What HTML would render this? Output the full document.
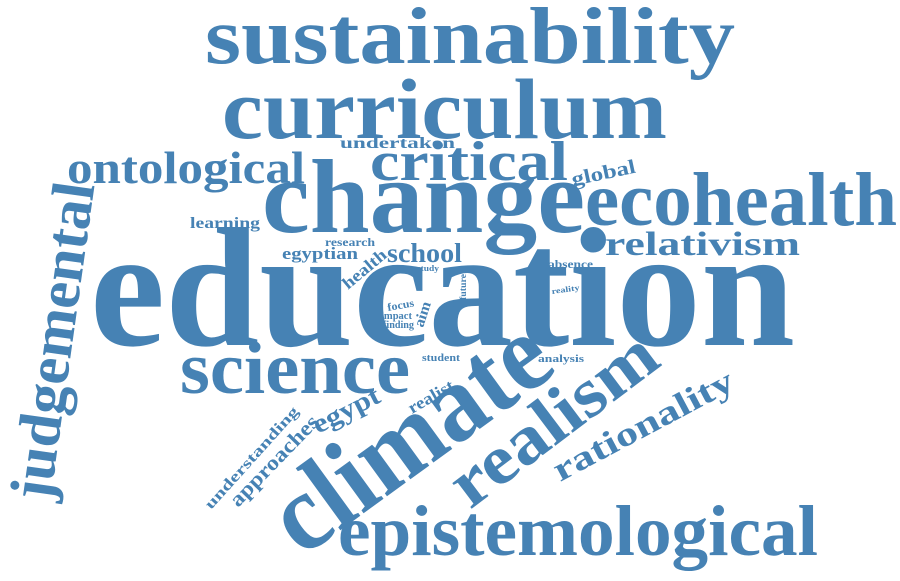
<!DOCTYPE html>
<html><head><meta charset="utf-8"><style>
html,body{margin:0;padding:0;background:#fff;}
svg{display:block}
text{font-family:"Liberation Serif",serif;font-weight:bold;fill:#4682b4;}
</style></head><body>
<svg width="900" height="581" viewBox="0 0 900 581" xmlns="http://www.w3.org/2000/svg">
<text x="205" y="63" font-size="80" textLength="530" lengthAdjust="spacingAndGlyphs">sustainability</text>
<text x="222" y="138" font-size="86" textLength="445" lengthAdjust="spacingAndGlyphs">curriculum</text>
<text x="67" y="183" font-size="46" textLength="238" lengthAdjust="spacingAndGlyphs">ontological</text>
<text x="370" y="180" font-size="56" textLength="198" lengthAdjust="spacingAndGlyphs">critical</text>
<text x="340" y="148" font-size="16" textLength="115" lengthAdjust="spacingAndGlyphs">undertaken</text>
<text x="0" y="0" font-size="20" textLength="65" lengthAdjust="spacingAndGlyphs" transform="translate(573,186) rotate(-12)">global</text>
<text x="262" y="232" font-size="105" textLength="323" lengthAdjust="spacingAndGlyphs">change</text>
<text x="585" y="225" font-size="76" textLength="312" lengthAdjust="spacingAndGlyphs">ecohealth</text>
<text x="190" y="228" font-size="16" textLength="70" lengthAdjust="spacingAndGlyphs">learning</text>
<text x="605" y="255" font-size="34" textLength="195" lengthAdjust="spacingAndGlyphs">relativism</text>
<text x="325" y="246" font-size="12" textLength="50" lengthAdjust="spacingAndGlyphs">research</text>
<text x="282" y="259" font-size="17" textLength="76" lengthAdjust="spacingAndGlyphs">egyptian</text>
<text x="387" y="262" font-size="27" textLength="75" lengthAdjust="spacingAndGlyphs">school</text>
<text x="0" y="0" font-size="17" textLength="52" lengthAdjust="spacingAndGlyphs" transform="translate(348,290) rotate(-40)">health</text>
<text x="548" y="268" font-size="12" textLength="45" lengthAdjust="spacingAndGlyphs">absence</text>
<text x="417" y="271" font-size="8" textLength="22" lengthAdjust="spacingAndGlyphs">study</text>
<text x="90" y="345" font-size="170" textLength="705" lengthAdjust="spacingAndGlyphs">education</text>
<text x="0" y="0" font-size="8" textLength="28" lengthAdjust="spacingAndGlyphs" transform="translate(552,294) rotate(-8)">reality</text>
<text x="0" y="0" font-size="9" textLength="26" lengthAdjust="spacingAndGlyphs" transform="translate(466,300) rotate(-90)">future</text>
<text x="445" y="307" font-size="5">part</text>
<text x="0" y="0" font-size="11" textLength="27" lengthAdjust="spacingAndGlyphs" transform="translate(388,311) rotate(-10)">focus</text>
<text x="0" y="0" font-size="15" textLength="26" lengthAdjust="spacingAndGlyphs" transform="translate(423,328) rotate(-72)">aim</text>
<text x="381" y="319" font-size="10" textLength="31" lengthAdjust="spacingAndGlyphs">impact</text>
<text x="383" y="328" font-size="10" textLength="31" lengthAdjust="spacingAndGlyphs">finding</text>
<text x="180" y="393" font-size="74" textLength="230" lengthAdjust="spacingAndGlyphs">science</text>
<text x="422" y="361" font-size="10" textLength="38" lengthAdjust="spacingAndGlyphs">student</text>
<text x="538" y="362" font-size="11" textLength="46" lengthAdjust="spacingAndGlyphs">analysis</text>
<text x="0" y="0" font-size="110" textLength="318" lengthAdjust="spacingAndGlyphs" transform="translate(302,558) rotate(-36)">climate</text>
<text x="0" y="0" font-size="70" textLength="242" lengthAdjust="spacingAndGlyphs" transform="translate(470,510) rotate(-37)">realism</text>
<text x="0" y="0" font-size="34" textLength="200" lengthAdjust="spacingAndGlyphs" transform="translate(560,482) rotate(-28)">rationality</text>
<text x="0" y="0" font-size="17" textLength="50" lengthAdjust="spacingAndGlyphs" transform="translate(412,414) rotate(-30)">realist</text>
<text x="0" y="0" font-size="27" textLength="72" lengthAdjust="spacingAndGlyphs" transform="translate(318,434) rotate(-27)">egypt</text>
<text x="0" y="0" font-size="21" textLength="118" lengthAdjust="spacingAndGlyphs" transform="translate(238,508) rotate(-46)">approaches</text>
<text x="0" y="0" font-size="15" textLength="132" lengthAdjust="spacingAndGlyphs" transform="translate(211,510) rotate(-48)">understanding</text>
<text x="0" y="0" font-size="60" textLength="320" lengthAdjust="spacingAndGlyphs" transform="translate(50,502) rotate(-82)">judgemental</text>
<text x="338" y="555" font-size="72" textLength="480" lengthAdjust="spacingAndGlyphs">epistemological</text>
</svg>
</body></html>
